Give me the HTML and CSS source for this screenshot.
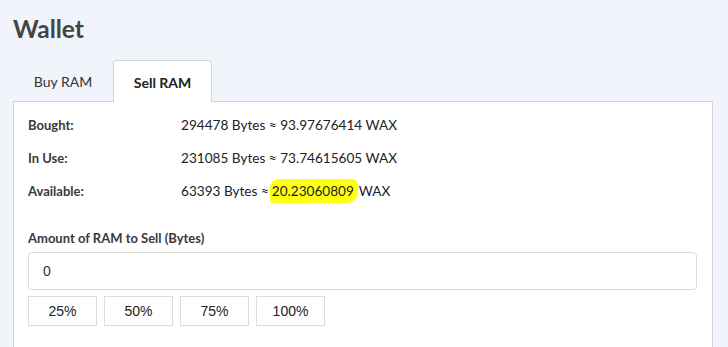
FILE: index.html
```html
<!DOCTYPE html>
<html lang="en">
<head>
    <meta charset="UTF-8">
    <title>Wallet</title>
    <link rel="stylesheet" href="styles.css">
</head>
<body>
    <h1 class="title">Wallet</h1>

    <div class="tabs">
        <div class="tab">Buy RAM</div>
        <div class="tab active">Sell RAM</div>
    </div>

    <div class="panel">
        <div class="stats">
            <div class="stat-row">
                <span class="stat-label">Bought:</span>
                <span class="stat-value">294478 Bytes ≈ 93.97676414 WAX</span>
            </div>
            <div class="stat-row">
                <span class="stat-label">In Use:</span>
                <span class="stat-value">231085 Bytes ≈ 73.74615605 WAX</span>
            </div>
            <div class="stat-row">
                <span class="stat-label">Available:</span>
                <span class="stat-value">63393 Bytes ≈<mark class="marker">20.23060809</mark>WAX</span>
            </div>
        </div>

        <label class="field-label" for="amount">Amount of RAM to Sell (Bytes)</label>
        <input class="field" id="amount" type="text" value="0">

        <div class="presets">
            <button class="preset">25%</button>
            <button class="preset">50%</button>
            <button class="preset">75%</button>
            <button class="preset">100%</button>
        </div>
    </div>
</body>
</html>
```

FILE: styles.css
```css
body {
    margin: 0;
    padding: 0 15px 0 13px;
    background-color: #f1f4fb;
    font-family: Lato, "Open Sans", sans-serif;
    color: #333;
    height: 347px;
    overflow: hidden;
    display: flex;
    flex-direction: column;
}
.title {
    margin: 14px 0 0 0;
    font-size: 24.5px;
    font-weight: 700;
    color: #444;
    line-height: 30px;
}

.tabs {
    display: flex;
    margin-top: 15px;
    height: 42px;
}
.tab {
    width: 100px;
    box-sizing: border-box;
    display: flex;
    align-items: center;
    justify-content: center;
    font-size: 14px;
    color: #333;
    padding-top: 2px;
}
.tab.active {
    width: 99px;
    background-color: #fff;
    border: 1px solid #d3d3d3;
    border-bottom: none;
    border-radius: 3px 3px 0 0;
    font-weight: 700;
    color: #222;
    position: relative;
    top: 1px;
}

.panel {
    flex: 1;
    background-color: #fff;
    border: 1px solid #d3d3d3;
    border-bottom: none;
    padding: 12px 15px 0 14px;
}

.stats {
    display: flex;
    flex-direction: column;
    gap: 11px;
}
.stat-row {
    display: flex;
    align-items: center;
    height: 22px;
    font-size: 14px;
}
.stat-label {
    width: 153px;
    flex-shrink: 0;
    font-size: 13px;
    font-weight: 700;
    color: #3a3a3a;
}
.stat-value {
    font-size: 13.6px;
    color: #222;
}
.marker {
    background-color: #ffff14;
    color: #222;
    padding: 4px 4px 4px 2px;
    margin: 0 1px 0 1px;
    border-radius: 9px 6px 10px 4px;
}

.field-label {
    display: block;
    margin-top: 28px;
    font-size: 13px;
    font-weight: 700;
    color: #3a3a3a;
}
.field {
    display: block;
    box-sizing: border-box;
    width: 100%;
    height: 38px;
    margin-top: 6px;
    padding: 0 14px;
    border: 1px solid #dcdcdc;
    border-radius: 4px;
    font-family: "Liberation Sans", Arial, sans-serif;
    font-size: 14px;
    color: #333;
    outline: none;
}

.presets {
    display: flex;
    gap: 7px;
    margin-top: 6px;
}
.preset {
    width: 69px;
    height: 30px;
    background-color: #fff;
    border: 1px solid #dcdcdc;
    border-radius: 0;
    font-family: "Liberation Sans", Arial, sans-serif;
    font-size: 14px;
    color: #222;
    padding: 0;
}
```
